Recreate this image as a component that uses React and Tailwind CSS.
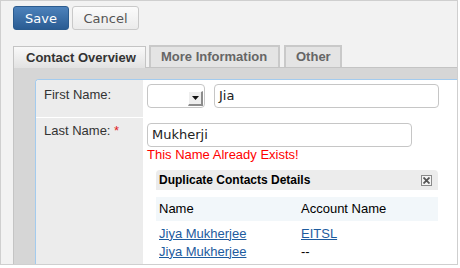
import React from "react";

const sans = { fontFamily: '"Liberation Sans", Arial, sans-serif' };
const dejavu = { fontFamily: '"DejaVu Sans", Verdana, sans-serif' };

const duplicates = [
  { name: "Jiya Mukherjee", account: "EITSL" },
  { name: "Jiya Mukherjee", account: null },
];

const App = () => {
  return (
    <div
      className="w-[458px] h-[265px] overflow-hidden border border-[#cfcfcf] bg-[#f2f2f2] pl-[12px] pt-[5px] flex flex-col"
      style={sans}
    >
      {/* Actions */}
      <div className="flex gap-[3px] h-[24px]" style={dejavu}>
        <button className="w-[56px] h-[24px] rounded-[3px] border border-[#2b5b8e] bg-gradient-to-b from-[#4d82bb] to-[#2a5c93] text-white text-[13px] leading-none">
          Save
        </button>
        <button className="w-[67px] h-[24px] rounded-[3px] border border-[#c9c9c9] bg-gradient-to-b from-[#fbfbfb] to-[#ebebeb] text-[#555] text-[13px] leading-none">
          Cancel
        </button>
      </div>

      {/* Tabs */}
      <div className="flex h-[22px] mt-[16px]">
        <div className="w-[133px] h-[22px] border border-b-0 border-[#c4c4c4] bg-gradient-to-b from-[#f9f9f9] to-[#e2e2e2] text-[13px] font-bold text-[#333] pl-[12px] leading-[22px]">
          Contact Overview
        </div>
        <div className="flex-1 flex items-end border-b border-[#c4c4c4]">
          <div className="ml-[3px] w-[131px] h-[22px] border-2 border-b-0 border-[#c9c9c9] bg-[#e4e4e4] text-[13px] font-bold text-[#666] pl-[10px] leading-[20px]">
            More Information
          </div>
          <div className="ml-[4px] w-[58px] h-[22px] border-2 border-b-0 border-[#c9c9c9] bg-[#e4e4e4] text-[13px] font-bold text-[#666] pl-[10px] leading-[20px]">
            Other
          </div>
        </div>
      </div>

      {/* Panel */}
      <div className="flex-1 flex flex-col border-l border-[#c4c4c4] bg-[#d6d6d6] pl-[21px] pt-[11px]">
        <div className="flex-1 border-l border-t border-[#a3cbee] rounded-tl-[4px] bg-white grid grid-cols-[107px_1fr] grid-rows-[37px_1fr] overflow-hidden">
          {/* First name */}
          <div className="bg-[#ececec] pl-[8px] pt-[7px] text-[13px] leading-[15px] text-[#333]">
            First Name:
          </div>
          <div className="flex pl-[4px] pt-[4px]" style={dejavu}>
            <div className="relative w-[58px] h-[24px] rounded-[4px] border border-[#c6c6c6] bg-white">
              <div className="absolute right-[1px] top-[6px] w-[15px] h-[15px] bg-[#eeeeee] border-r-2 border-b-2 border-[#8c8c8c] border-l border-t border-l-white border-t-white flex items-center justify-center">
                <svg width="7" height="4" viewBox="0 0 7 4">
                  <path d="M0 0h7L3.5 4z" fill="#111" />
                </svg>
              </div>
            </div>
            <div className="ml-[9px] w-[225px] h-[24px] rounded-[4px] border border-[#c6c6c6] bg-white pl-[4px] text-[13px] leading-[22px] text-[#222]">
              Jia
            </div>
          </div>

          {/* Last name */}
          <div className="bg-[#ececec] border-t border-white pl-[8px] pt-[5px] text-[13px] leading-[15px] text-[#333]">
            Last Name: <span className="text-[#e0201c]">*</span>
          </div>
          <div className="border-t border-white pl-[4px] pt-[5px]">
            <div
              className="w-[265px] h-[24px] rounded-[4px] border border-[#c6c6c6] bg-white pl-[4px] text-[13px] leading-[22px] text-[#222]"
              style={dejavu}
            >
              Mukherji
            </div>
            <div className="text-[13px] leading-[15px] text-[#ff0000]">
              This Name Already Exists!
            </div>

            {/* Duplicates */}
            <div className="ml-[9px] mt-[8px] w-[282px]">
              <div className="h-[20px] rounded-t-[4px] bg-[#ececec] flex items-center justify-between pl-[3px] pr-[6px]">
                <span className="text-[12px] font-bold text-black leading-none">
                  Duplicate Contacts Details
                </span>
                <div className="w-[11px] h-[11px] border border-[#8a8a8a] bg-[#f4f4f4] flex items-center justify-center">
                  <svg width="7" height="7" viewBox="0 0 7 7">
                    <path d="M0.5 0.5l6 6M6.5 0.5l-6 6" stroke="#555" strokeWidth="1.8" />
                  </svg>
                </div>
              </div>
              <div className="mt-[7px] h-[24px] bg-[#f2f7fa] grid grid-cols-[145px_1fr] items-center text-[13px] text-black">
                <span className="pl-[3px]">Name</span>
                <span>Account Name</span>
              </div>
              <div className="pt-[3px]">
                {duplicates.map((row, i) => (
                  <div key={i} className="h-[18px] grid grid-cols-[145px_1fr] items-center text-[13px] leading-[15px]">
                    <span className="pl-[3px] text-[#1d5b9e] underline">{row.name}</span>
                    {row.account ? (
                      <span className="text-[#1d5b9e] underline">{row.account}</span>
                    ) : (
                      <span className="text-black">--</span>
                    )}
                  </div>
                ))}
              </div>
            </div>
          </div>
        </div>
      </div>
    </div>
  );
};

export default App;
